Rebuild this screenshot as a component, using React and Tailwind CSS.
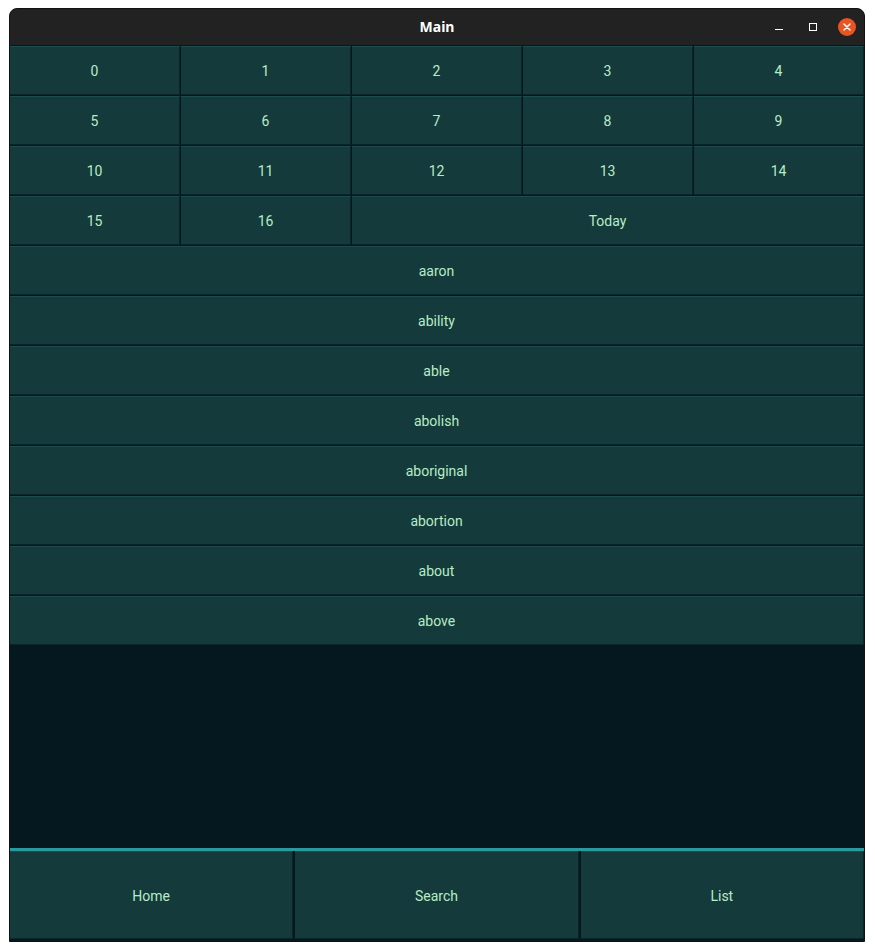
const numbers = Array.from({ length: 17 }, (_, i) => String(i));
const words = ["aaron", "ability", "able", "abolish", "aboriginal", "abortion", "about", "above"];

function Cell({ children, className = "" }) {
  return (
    <button
      type="button"
      className={`flex items-center justify-center pt-[2px] bg-[#143a3b] border-t border-t-[#1d4b4e] border-b border-b-[#0b252a] border-r border-r-[#0b252a] text-[14px] text-[#b8ecc4] ${className}`}
    >
      {children}
    </button>
  );
}

export default function App() {
  return (
    <div className="w-[875px] h-[951px] bg-white pt-[8px] pl-[9px] font-['Roboto',sans-serif]">
      <div className="w-[856px] h-[934px] flex flex-col bg-[#051820] border border-[#111] rounded-t-[8px] overflow-hidden">
        {/* title bar */}
        <div className="relative h-[36px] shrink-0 bg-[#222222] flex items-center justify-center">
          <span className="text-white text-[14px] font-bold font-['Noto_Sans',sans-serif] -mt-[2px]">Main</span>
          <div className="absolute right-[8px] top-0 h-full flex items-center">
            <span className="w-[8px] h-[1px] bg-white mt-[4px]" />
            <span className="w-[8px] h-[8px] border border-white ml-[26px]" />
            <span className="w-[18px] h-[18px] rounded-full bg-[#e95420] flex items-center justify-center ml-[21px]">
              <svg width="8" height="8" viewBox="0 0 8 8">
                <path d="M1 1L7 7M7 1L1 7" stroke="white" strokeWidth="1.5" strokeLinecap="round" />
              </svg>
            </span>
          </div>
        </div>

        {/* number grid */}
        <div className="mt-px grid grid-cols-5 gap-x-px gap-y-px auto-rows-[49px]">
          {numbers.map((n) => (
            <Cell key={n}>{n}</Cell>
          ))}
          <Cell className="col-span-3">Today</Cell>
        </div>

        {/* word list */}
        <div className="mt-px flex flex-col gap-px">
          {words.map((w) => (
            <Cell key={w} className="h-[49px]">{w}</Cell>
          ))}
        </div>

        <div className="flex-1" />

        {/* bottom tabs */}
        <div className="h-[3px] bg-[#2a9a9e]" />
        <div className="h-[88px] grid grid-cols-3 gap-x-[2px] mb-[2px]">
          <Cell>Home</Cell>
          <Cell>Search</Cell>
          <Cell>List</Cell>
        </div>
      </div>
    </div>
  );
}
